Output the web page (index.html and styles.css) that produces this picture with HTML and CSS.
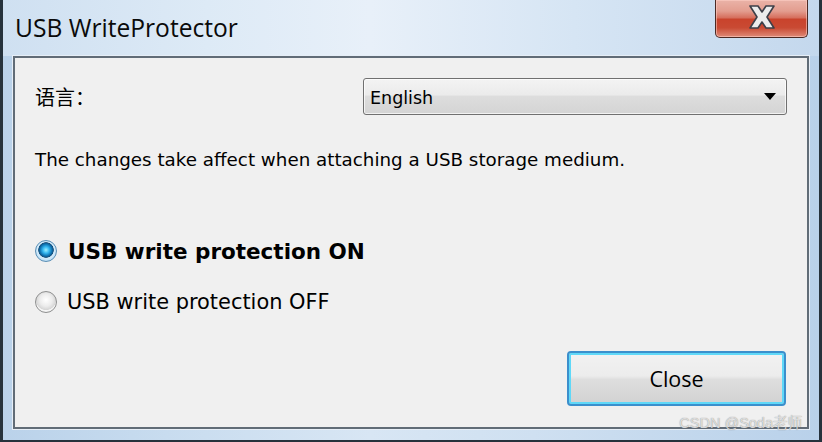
FILE: index.html
```html
<!DOCTYPE html>
<html>
<head>
<meta charset="utf-8">
<link rel="stylesheet" href="styles.css">
</head>
<body>
<div class="window">
  <div class="titlebar">
    <span class="title">USB WriteProtector</span>
    <div class="close-x">
      <svg width="30" height="26" viewBox="0 0 30 26">
        <path d="M3 2 H11 L15 8 L19 2 H27 L20 13 L27 24 H19 L15 18 L11 24 H3 L10 13 Z" fill="#ececec" stroke="#3d3f48" stroke-width="1.6" stroke-linejoin="round"/>
      </svg>
    </div>
  </div>
  <div class="client">
    <div class="lang-row">
      <span class="label">语言：</span>
      <div class="select"><span class="select-text">English</span><span class="arrow"></span></div>
    </div>
    <p class="desc">The changes take affect when attaching a USB storage medium.</p>
    <div class="radios">
      <div class="radio radio-on"><span class="dot"></span><span class="radio-text">USB write protection ON</span></div>
      <div class="radio radio-off"><span class="dot"></span><span class="radio-text">USB write protection OFF</span></div>
    </div>
    <div class="footer"><div class="btn">Close</div></div>
  </div>
  <div class="watermark">CSDN @Soda老师</div>
</div>
</body>
</html>
```
FILE: styles.css
```css
html, body {
  margin: 0;
  padding: 0;
  background: #23303a;
}
.window {
  position: relative;
  width: 816px;
  height: 440px;
  border-left: 3px solid #26323c;
  border-right: 3px solid #26323c;
  border-bottom: 2px solid #26323c;
  background: linear-gradient(90deg, #bad2ea 0%, #c8dcef 20%, #d8e6f4 45%, #cfe0f1 65%, #b9d1ea 100%);
  display: flex;
  flex-direction: column;
  overflow: hidden;
}
.titlebar {
  height: 56px;
  display: flex;
  align-items: flex-start;
  justify-content: space-between;
  background: linear-gradient(90deg, rgba(207,224,241,1) 0%, rgba(221,234,246,1) 25%, rgba(232,240,249,1) 45%, rgba(214,229,244,1) 70%, rgba(196,216,237,1) 100%);
}
.title {
  margin-left: 12px;
  margin-top: 12px;
  font-family: "Open Sans", "Noto Sans", sans-serif;
  font-size: 24.6px;
  line-height: 32px;
  color: #0a0a0a;
}
.close-x {
  width: 91px;
  height: 37px;
  margin-right: 11px;
  border: 1px solid #4c2a24;
  border-top: none;
  border-radius: 0 0 5px 5px;
  background: linear-gradient(180deg, #eab3a8 0%, #e39d8f 30%, #d66f5d 48%, #c9432c 52%, #c94a33 75%, #df8b78 100%);
  box-shadow: inset 0 0 0 1px rgba(255,210,200,0.55);
  display: flex;
  align-items: center;
  justify-content: center;
}
.close-x svg { display: block; margin-top: -4px; }
.client {
  flex: 1;
  margin: 0 10px 11px 10px;
  border: 2px solid #616c77;
  box-shadow: 0 0 0 1px #e6eef7;
  background: #f0f0f0;
  padding: 20px 20px 0 20px;
  display: flex;
  flex-direction: column;
  font-family: "DejaVu Sans", sans-serif;
  color: #000;
}
.lang-row {
  display: flex;
  justify-content: space-between;
  align-items: center;
  height: 37px;
}
.label {
  font-family: "Noto Sans CJK SC", sans-serif;
  font-size: 20px;
  line-height: 24px;
  margin-top: 1px;
}
.select {
  width: 406px;
  height: 35px;
  border: 1px solid #707070;
  border-radius: 3px;
  background: linear-gradient(180deg, #f3f3f3 0%, #ebebeb 45%, #dddddd 50%, #d4d4d4 100%);
  box-shadow: inset 0 0 0 1px rgba(255,255,255,0.7);
  display: flex;
  align-items: center;
  justify-content: space-between;
  padding: 0 10px 0 6px;
  box-sizing: content-box;
}
.select-text {
  font-size: 17.5px;
  margin-top: 2px;
}
.arrow {
  width: 0;
  height: 0;
  border-left: 6px solid transparent;
  border-right: 6px solid transparent;
  border-top: 7px solid #000;
}
.desc {
  margin: 33px 0 0 0;
  font-size: 18.3px;
  line-height: 24px;
  height: 24px;
}
.radios {
  margin-top: 64px;
  display: flex;
  flex-direction: column;
  gap: 21px;
}
.radio {
  display: flex;
  align-items: center;
  height: 30px;
}
.dot {
  width: 22px;
  height: 22px;
  border-radius: 50%;
  box-sizing: border-box;
  flex: none;
}
.radio-on .dot {
  border: 1px solid #5b8fb5;
  background: radial-gradient(circle at 50% 45%, #9ef0ff 0%, #33b6f0 22%, #0b6aa8 42%, #1a4f78 50%, #d8eefc 54%, #b8dcf4 75%, #e9f6ff 100%);
}
.radio-off .dot {
  border: 1px solid #8e8f8f;
  background: radial-gradient(circle at 50% 40%, #ffffff 0%, #ececec 40%, #d6d6d6 62%, #f7f7f7 66%, #e4e4e4 100%);
}
.radio-text { margin-left: 11px; }
.radio-on .radio-text {
  font-weight: bold;
  font-size: 21.5px;
}
.radio-off .radio-text {
  margin-left: 10px;
  font-size: 20.9px;
}
.footer {
  margin-top: 34px;
  display: flex;
  justify-content: flex-end;
  padding-right: 1px;
}
.btn {
  width: 215px;
  height: 51px;
  border: 2px solid #3b8fcc;
  border-radius: 4px;
  box-shadow: inset 0 0 0 2px #5fd8f8;
  background: linear-gradient(180deg, #f2f2f2 0%, #ececec 45%, #dedede 52%, #d2d2d2 100%);
  display: flex;
  align-items: center;
  justify-content: center;
  font-family: "Open Sans", "Noto Sans", sans-serif;
  font-size: 21.5px;
  color: #000;
}
.watermark {
  position: absolute;
  right: 17px;
  bottom: 8px;
  font-family: "Liberation Sans", "Noto Sans CJK SC", sans-serif;
  font-size: 14.5px;
  color: rgba(235,235,235,0.85);
  text-shadow: 0 0 1px rgba(110,110,110,0.9);
}
```
